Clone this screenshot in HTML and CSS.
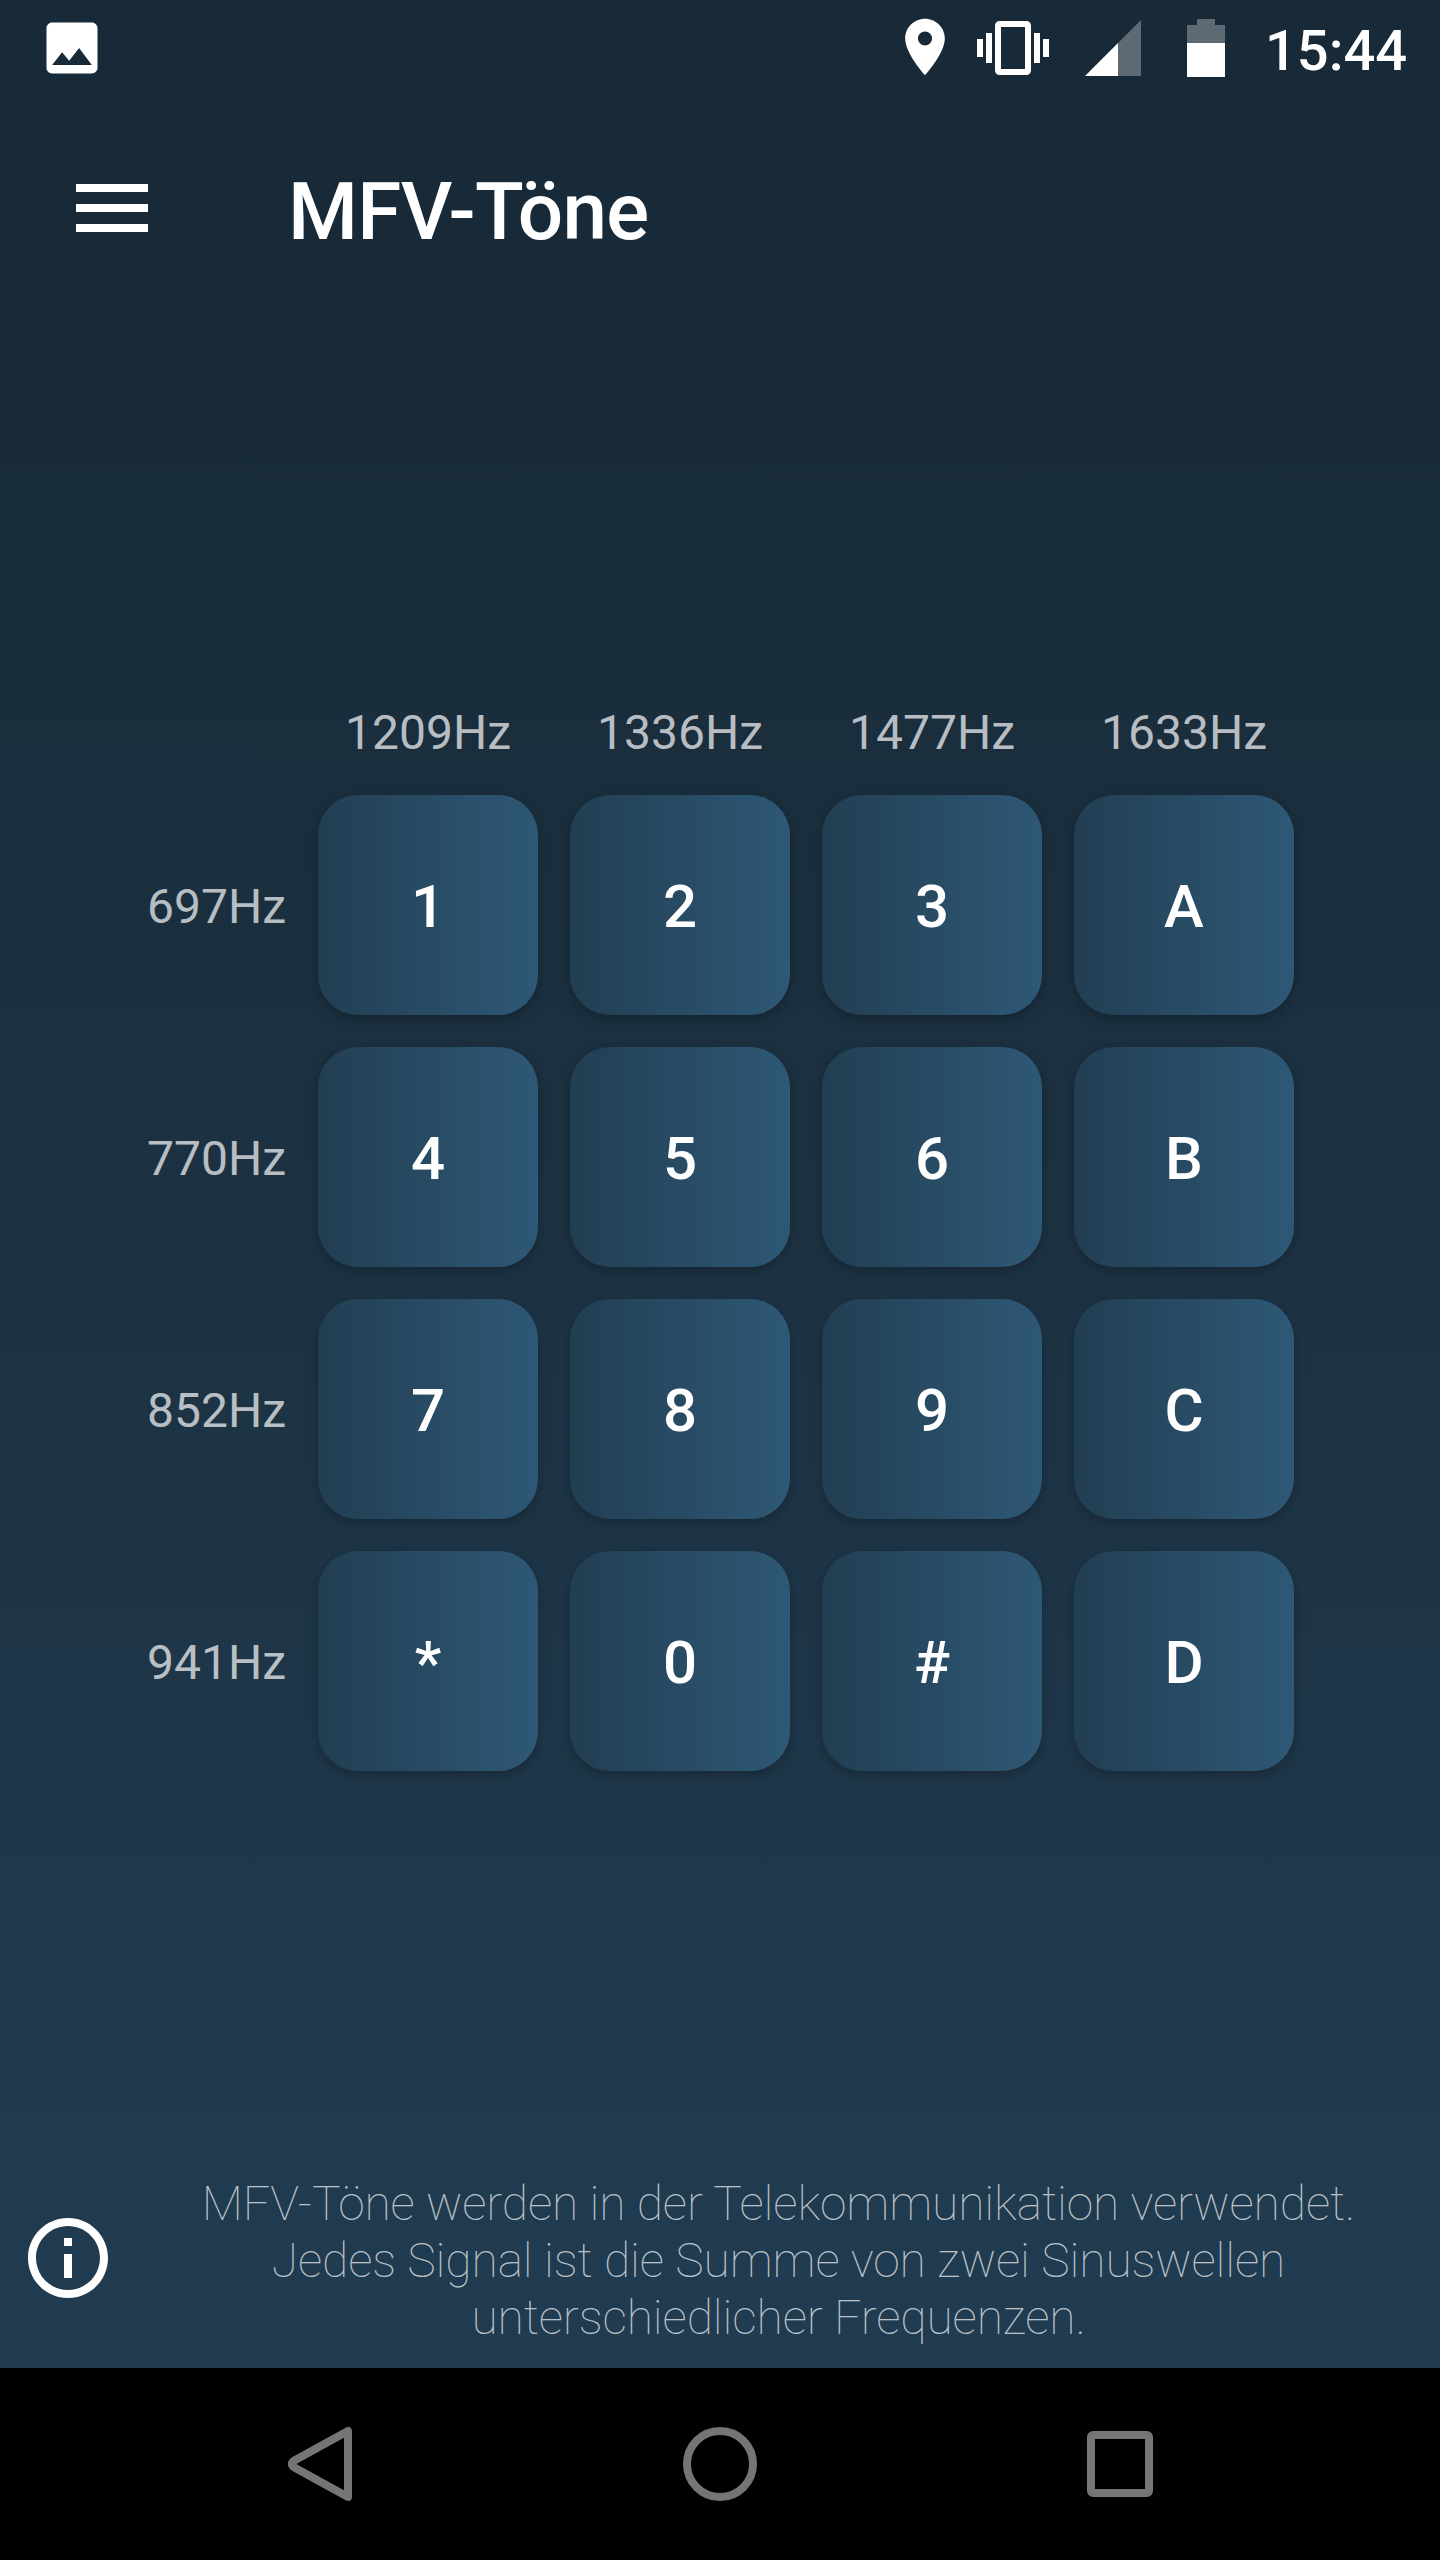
FILE: index.html
```html
<!DOCTYPE html>
<html lang="de">
<head>
    <meta charset="UTF-8" />
    <meta name="viewport" content="width=device-width, initial-scale=1" />
    <title>MFV-Töne</title>
    <link rel="stylesheet" href="styles.css">
</head>
<body>
    <div class="status-bar">
        <svg class="icon-image" viewBox="0 0 24 24"><path d="M21 19V5c0-1.1-.9-2-2-2H5c-1.1 0-2 .9-2 2v14c0 1.1.9 2 2 2h14c1.1 0 2-.9 2-2zM8.5 13.5l2.5 3.01L14.5 12l4.5 6H5l3.5-4.5z"/></svg>
        <svg class="icon-location" viewBox="0 0 24 24"><path d="M12 2C8.13 2 5 5.13 5 9c0 5.25 7 13 7 13s7-7.75 7-13c0-3.87-3.13-7-7-7zm0 9.5a2.5 2.5 0 0 1 0-5 2.5 2.5 0 0 1 0 5z"/></svg>
        <svg class="icon-vibration" viewBox="0 0 24 24"><path d="M0 15h2V9H0v6zm3 2h2V7H3v10zm19-8v6h2V9h-2zm-3 8h2V7h-2v10zM16.5 3h-9C6.67 3 6 3.67 6 4.5v15c0 .83.67 1.5 1.5 1.5h9c.83 0 1.5-.67 1.5-1.5v-15c0-.83-.67-1.5-1.5-1.5zM16 19H8V5h8v14z"/></svg>
        <svg class="icon-signal" viewBox="0 0 56 56"><path class="dim" d="M33 23L56 0v56H33z"/><path d="M0 56l33-33v33z"/></svg>
        <svg class="icon-battery" viewBox="0 0 38 58"><path class="dim" d="M0 6h10V0h18v6h10v18H0z"/><path d="M0 24h38v34H0z"/></svg>
        <span class="clock">15:44</span>
    </div>

    <header class="app-bar">
        <svg class="icon-menu" viewBox="0 0 24 24"><path d="M3 18h18v-2H3v2zm0-5h18v-2H3v2zm0-7v2h18V6H3z"/></svg>
        <h1>MFV-Töne</h1>
    </header>

    <main>
        <div class="keypad">
            <span></span>
            <span class="freq">1209Hz</span>
            <span class="freq">1336Hz</span>
            <span class="freq">1477Hz</span>
            <span class="freq">1633Hz</span>

            <span class="freq row">697Hz</span>
            <button>1</button>
            <button>2</button>
            <button>3</button>
            <button>A</button>

            <span class="freq row">770Hz</span>
            <button>4</button>
            <button>5</button>
            <button>6</button>
            <button>B</button>

            <span class="freq row">852Hz</span>
            <button>7</button>
            <button>8</button>
            <button>9</button>
            <button>C</button>

            <span class="freq row">941Hz</span>
            <button>*</button>
            <button>0</button>
            <button>#</button>
            <button>D</button>
        </div>
    </main>

    <footer class="info">
        <svg class="icon-info" viewBox="0 0 24 24"><path d="M11 7h2v2h-2zm0 4h2v6h-2zm1-9C6.48 2 2 6.48 2 12s4.48 10 10 10 10-4.48 10-10S17.52 2 12 2zm0 18c-4.41 0-8-3.59-8-8s3.59-8 8-8 8 3.59 8 8-3.59 8-8 8z"/></svg>
        <p>MFV-Töne werden in der Telekommunikation verwendet.<br>Jedes Signal ist die Summe von zwei Sinuswellen<br>unterschiedlicher Frequenzen.</p>
    </footer>

    <nav class="nav-bar">
        <svg viewBox="0 0 80 80"><path d="M68 7v66L13.500 43q-3.500-3 0-6z"/></svg>
        <svg viewBox="0 0 80 80"><circle cx="40" cy="40" r="33"/></svg>
        <svg viewBox="0 0 80 80"><rect x="11" y="11" width="58" height="58" rx="2"/></svg>
    </nav>
</body>
</html>
```

FILE: styles.css
```css
* {
    box-sizing: border-box;
}
body {
    margin: 0;
    width: 1440px;
    height: 2560px;
    display: flex;
    flex-direction: column;
    font-family: Roboto, sans-serif;
    color: #fff;
    background: linear-gradient(180deg, #182a37 0, #182a37 320px, #213c51 2368px);
}
svg {
    display: block;
    flex: none;
    fill: #fff;
}

/* Status bar */
.status-bar {
    height: 96px;
    display: flex;
    align-items: flex-start;
    padding: 12px 32px 0 38px;
}
.icon-image {
    width: 68px;
    height: 68px;
    margin-top: 2px;
}
.icon-location {
    width: 68px;
    height: 68px;
    margin: 1px 18px 0 auto;
}
.icon-vibration {
    width: 72px;
    height: 72px;
    margin-right: 36px;
}
.icon-signal {
    width: 56px;
    height: 56px;
    margin: 8px 46px 0 0;
}
.icon-battery {
    width: 38px;
    height: 58px;
    margin: 7px 40px 0 0;
}
.dim {
    fill: rgba(255, 255, 255, 0.3);
}
.clock {
    width: 143px;
    font-size: 56px;
    font-weight: 500;
    line-height: 66px;
    margin-top: 6px;
}

/* App bar */
.app-bar {
    height: 224px;
    display: flex;
    align-items: center;
    padding-left: 64px;
}
.icon-menu {
    width: 96px;
    height: 96px;
    margin-right: 128px;
}
h1 {
    margin: 8px 0 0;
    font-size: 80px;
    font-weight: 500;
    letter-spacing: -0.65px;
}

/* Keypad */
main {
    flex: 1;
    padding-top: 383px;
}
.keypad {
    display: grid;
    grid-template-columns: 286px repeat(4, 220px);
    grid-template-rows: 60px repeat(4, 220px);
    gap: 32px;
}
.freq {
    text-align: center;
    font-size: 48px;
    line-height: 60px;
    color: rgba(255, 255, 255, 0.7);
}
.freq.row {
    align-self: center;
    padding-top: 4px;
    text-align: right;
}
button {
    border: none;
    border-radius: 40px;
    padding: 3px 0 0;
    font: 500 60px Roboto, sans-serif;
    color: #fff;
    background: linear-gradient(90deg, #223e52, #2e5876);
    box-shadow: 0 4px 12px rgba(0, 0, 0, 0.25);
}

/* Info text */
.info {
    height: 204px;
    display: flex;
    align-items: flex-start;
    padding: 11px 18px 0 20px;
}
.icon-info {
    width: 96px;
    height: 96px;
    margin: 35px 19px 0 0;
}
.info p {
    flex: 1;
    margin: 0;
    text-align: center;
    font-size: 48px;
    font-weight: 100;
    line-height: 57px;
    letter-spacing: -0.13px;
    color: rgba(255, 255, 255, 0.7);
}

/* Android navigation */
.nav-bar {
    height: 192px;
    display: flex;
    align-items: center;
    justify-content: center;
    gap: 320px;
    background: #000;
}
.nav-bar svg {
    width: 80px;
    height: 80px;
    fill: none;
    stroke: #757575;
    stroke-width: 8;
    stroke-linejoin: round;
}
```
